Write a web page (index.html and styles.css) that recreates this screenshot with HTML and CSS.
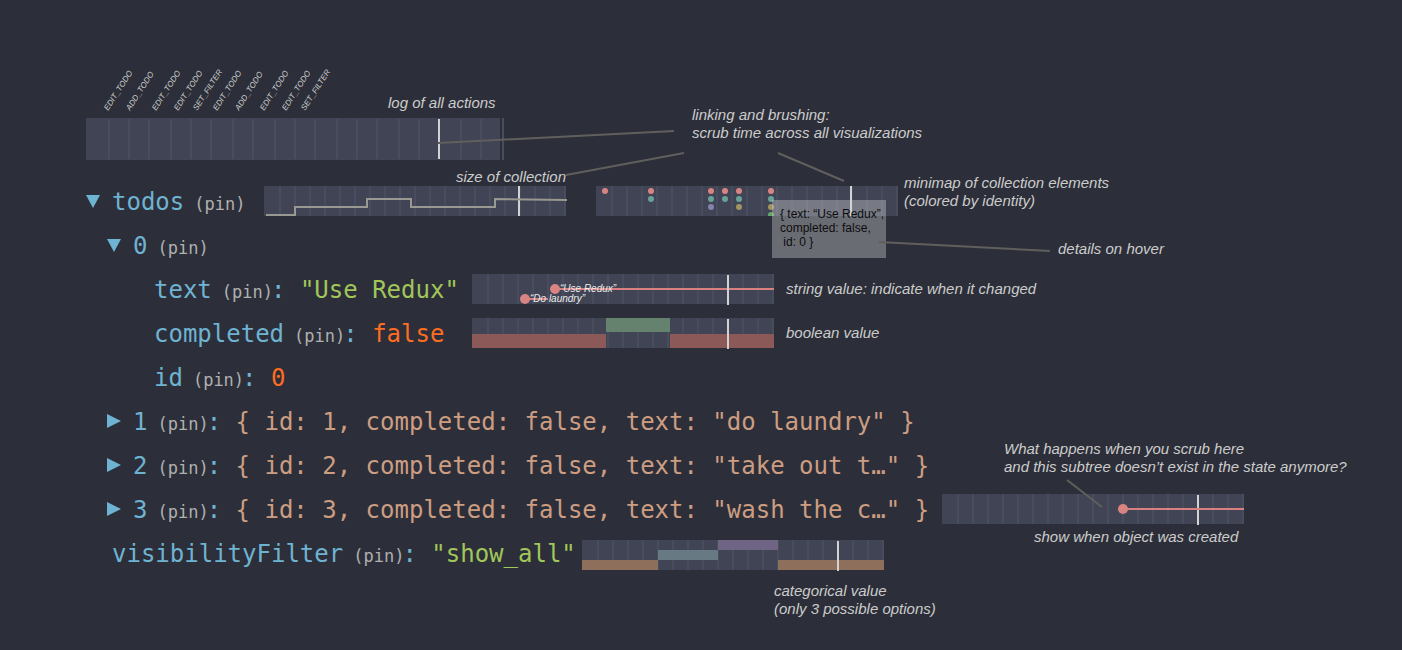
FILE: index.html
```html
<!DOCTYPE html>
<html lang="en">
<head>
<meta charset="utf-8">
<title>State inspector</title>
<link rel="stylesheet" href="styles.css">
</head>
<body>
<svg class="defs" width="0" height="0" aria-hidden="true">
  <defs>
    <pattern id="ticks" width="15" height="30" patternUnits="userSpaceOnUse">
      <rect class="track" width="15" height="30"/>
      <rect class="tick" width="2" height="30"/>
    </pattern>
    <g id="strip">
      <rect fill="url(#ticks)" width="302" height="30"/>
      <rect class="track" width="2" height="30"/>
    </g>
  </defs>
</svg>
<main class="board">
  <header class="log">
    <svg class="names" width="260" height="50" viewBox="86 64 260 50">
      <text transform="translate(108 111) rotate(-57)">EDIT_TODO</text>
      <text transform="translate(130 111) rotate(-57)">ADD_TODO</text>
      <text transform="translate(156 111) rotate(-57)">EDIT_TODO</text>
      <text transform="translate(178 111) rotate(-57)">EDIT_TODO</text>
      <text transform="translate(197 111) rotate(-57)">SET_FILTER</text>
      <text transform="translate(217 111) rotate(-57)">EDIT_TODO</text>
      <text transform="translate(239 111) rotate(-57)">ADD_TODO</text>
      <text transform="translate(264 111) rotate(-57)">EDIT_TODO</text>
      <text transform="translate(286 111) rotate(-57)">EDIT_TODO</text>
      <text transform="translate(305 111) rotate(-57)">SET_FILTER</text>
    </svg>
    <svg class="actions" width="418" height="42" viewBox="0 0 418 42">
      <rect class="track" width="414" height="42"/>
      <path class="tick" d="M22 1h2v40h-2zM42 1h2v40h-2zM62 1h2v40h-2zM84 1h2v40h-2zM104 1h2v40h-2zM124 1h2v40h-2zM146 1h2v40h-2zM166 1h2v40h-2zM188 1h2v40h-2zM208 1h2v40h-2zM228 1h2v40h-2zM250 1h2v40h-2zM270 1h2v40h-2zM290 1h2v40h-2zM312 1h2v40h-2zM332 1h2v40h-2zM374 1h2v40h-2zM394 1h2v40h-2zM416 0h2v42h-2z"/>
      <rect class="cursor" x="352" y="1" width="2" height="40"/>
    </svg>
  </header>

  <section class="tree">
    <div class="row root">
      <button class="toggle" aria-label="Collapse todos"><svg width="14" height="14"><path d="M0 1H14L7 14Z"/></svg></button>
      <div class="entry w-root"><span class="key">todos</span><button class="pin">(pin)</button></div>
      <svg class="strip" width="304" height="30">
        <use href="#strip"/>
        <rect class="cursor" x="254" width="2" height="30"/>
        <path class="size" d="M2 29H31V21H103V13H147V21H231V13L303 14"/>
      </svg>
      <svg class="strip minimap" width="302" height="30">
        <use href="#strip"/>
        <g class="c-red"><circle cx="9" cy="5" r="3"/><circle cx="55" cy="5" r="3"/><circle cx="115" cy="5" r="3"/><circle cx="129" cy="5" r="3"/><circle cx="143" cy="5" r="3"/><circle cx="175" cy="5" r="3"/></g>
        <g class="c-teal"><circle cx="55" cy="13" r="3"/><circle cx="115" cy="13" r="3"/><circle cx="129" cy="13" r="3"/><circle cx="143" cy="13" r="3"/><circle cx="175" cy="13" r="3"/></g>
        <circle class="c-purple" cx="115" cy="21" r="3"/>
        <g class="c-yellow"><circle cx="143" cy="21" r="3"/><circle cx="175" cy="21" r="3"/></g>
        <circle class="c-green" cx="175" cy="29" r="3"/>
        <rect class="cursor" x="254" width="2" height="30"/>
      </svg>
    </div>
    <div class="row item">
      <button class="toggle" aria-label="Collapse 0"><svg width="14" height="14"><path d="M0 1H14L7 14Z"/></svg></button>
      <div class="entry"><span class="key">0</span><button class="pin">(pin)</button></div>
    </div>
    <div class="row leaf">
      <div class="entry w-leaf"><span class="key">text</span><button class="pin">(pin)</button><span class="key">: </span><span class="string">"Use Redux"</span></div>
      <svg class="strip" width="302" height="32" viewBox="0 -1 302 32">
        <use href="#strip"/>
        <path class="event" d="M83 15H302M53 25H76"/>
        <g class="c-red"><circle cx="83" cy="15" r="5"/><circle cx="53" cy="25" r="5"/></g>
        <text x="88" y="18">“Use Redux”</text>
        <text x="58" y="28">“Do laundry”</text>
        <rect class="cursor" x="255" y="1" width="2" height="30"/>
      </svg>
      <span class="note">string value: indicate when it changed</span>
    </div>
    <div class="row leaf">
      <div class="entry w-leaf"><span class="key">completed</span><button class="pin">(pin)</button><span class="key">: </span><span class="literal">false</span></div>
      <svg class="strip" width="302" height="32" viewBox="0 -1 302 32">
        <use href="#strip"/>
        <path class="no" d="M0 16H134V30H0ZM198 16H302V30H198Z"/>
        <rect class="yes" x="134" width="64" height="14"/>
        <rect class="cursor" x="255" y="1" width="2" height="30"/>
      </svg>
      <span class="note">boolean value</span>
    </div>
    <div class="row leaf">
      <div class="entry"><span class="key">id</span><button class="pin">(pin)</button><span class="key">: </span><span class="literal">0</span></div>
    </div>
    <div class="row item">
      <button class="toggle" aria-label="Expand 1"><svg width="14" height="14"><path d="M0 0L14 7L0 14Z"/></svg></button>
      <div class="entry"><span class="key">1</span><button class="pin">(pin)</button><span class="key">: </span><span class="preview">{ id: 1, completed: false, text: "do laundry" }</span></div>
    </div>
    <div class="row item">
      <button class="toggle" aria-label="Expand 2"><svg width="14" height="14"><path d="M0 0L14 7L0 14Z"/></svg></button>
      <div class="entry"><span class="key">2</span><button class="pin">(pin)</button><span class="key">: </span><span class="preview">{ id: 2, completed: false, text: "take out t…" }</span></div>
    </div>
    <div class="row item">
      <button class="toggle" aria-label="Expand 3"><svg width="14" height="14"><path d="M0 0L14 7L0 14Z"/></svg></button>
      <div class="entry w-item"><span class="key">3</span><button class="pin">(pin)</button><span class="key">: </span><span class="preview">{ id: 3, completed: false, text: "wash the c…" }</span></div>
      <svg class="strip" width="302" height="32" viewBox="0 -1 302 32">
        <use href="#strip"/>
        <rect class="cursor" x="255" y="1" width="2" height="30"/>
        <path class="event" d="M181 15H302"/>
        <circle class="c-red" cx="181" cy="15" r="5"/>
      </svg>
    </div>
    <div class="row filter">
      <div class="entry w-filter"><span class="key">visibilityFilter</span><button class="pin">(pin)</button><span class="key">: </span><span class="string">"show_all"</span></div>
      <svg class="strip" width="302" height="36" viewBox="0 -5 302 36">
        <use href="#strip"/>
        <path class="cat-a" d="M0 20H76V30H0ZM196 20H302V30H196Z"/>
        <rect class="cat-b" x="76" y="10" width="60" height="10"/>
        <rect class="cat-c" x="136" width="60" height="10"/>
        <rect class="cursor" x="255" y="1" width="2" height="30"/>
      </svg>
    </div>
    <p class="note caption">categorical value<br>(only 3 possible options)</p>
  </section>

  <div class="tooltip" role="tooltip">{ text: “Use Redux”,
completed: false,
 id: 0 }</div>

  <svg class="connectors" width="1110" height="520" aria-hidden="true">
    <path d="M438 143L674 131M566 175L684 153M778 153L844 181M879 242L1050 251M1067 480L1102 507"/>
  </svg>
  <p class="note pinned n-log">log of all actions</p>
  <p class="note pinned n-link">linking and brushing:<br>scrub time across all visualizations</p>
  <p class="note pinned n-size">size of collection</p>
  <p class="note pinned n-map">minimap of collection elements<br>(colored by identity)</p>
  <p class="note pinned n-hover">details on hover</p>
  <p class="note pinned n-what">What happens when you scrub here<br>and this subtree doesn’t exist in the state anymore?</p>
  <p class="note pinned n-show">show when object was created</p>
</main>
</body>
</html>
```
FILE: styles.css
```css
body {
  margin: 0;
  background: #2c2f39;
  color: #cccccc;
  font-family: "Liberation Sans", Arial, sans-serif;
}

svg { display: block; flex: none; }
.defs { position: absolute; }

.board { position: relative; padding: 64px 0 24px; }

/* Timeline parts */
.track { fill: #404454; }
.tick { fill: #484d5e; }
.cursor { fill: #d2d2d2; }
.size { fill: none; stroke: #999891; stroke-width: 2; }
.event { stroke: #d88180; stroke-width: 2; }
.c-red { fill: #d88482; }
.c-teal { fill: #69a198; }
.c-purple { fill: #8582b0; }
.c-yellow { fill: #a19362; }
.c-green { fill: #65a56d; }
.no { fill: #8c5959; }
.yes { fill: #65826e; }
.cat-a { fill: #8d6f5b; }
.cat-b { fill: #677a84; }
.cat-c { fill: #6f6484; }
.strip text { fill: #ececec; font-size: 10px; font-style: italic; }

/* Action log */
.log {
  display: flex;
  flex-direction: column;
  gap: 4px;
  padding: 0 86px 19px;
}
.names { overflow: visible; }
.names text { fill: #d0d0d0; font-size: 8px; font-style: italic; }

/* State tree */
.row { display: flex; align-items: center; height: 44px; white-space: nowrap; }
.root { padding-left: 86px; }
.item { padding-left: 107px; }
.leaf { padding-left: 154px; }
.filter { padding-left: 112px; }

.entry {
  flex: none;
  padding-top: 2px;
  font: 24px/42px "DejaVu Sans Mono", monospace;
  white-space: pre;
}
.w-root { width: 152px; }
.w-leaf { width: 318px; }
.w-item { width: 809px; }
.w-filter { width: 470px; }

button { margin: 0; padding: 0; border: 0; background: none; cursor: pointer; }
.toggle { margin-right: 12px; fill: #6fb3d2; }
.pin { margin: 0 -2px 0 10px; color: #b0b0b0; font: 17px "DejaVu Sans Mono", monospace; }
.key { color: #6fb3d2; }
.string { color: #a1c659; }
.literal { color: #fc6d24; }
.preview { color: #cd9d82; }
.minimap { margin-left: 28px; }

/* Annotations */
.note { margin: 0; font-size: 15px; font-style: italic; line-height: 18px; white-space: nowrap; }
.strip + .note { margin-left: 12px; }
.caption { padding: 7px 0 0 774px; }
.pinned { position: absolute; }
.n-log { left: 388px; top: 94px; }
.n-link { left: 692px; top: 106px; }
.n-size { left: 456px; top: 168px; }
.n-map { left: 904px; top: 174px; }
.n-hover { left: 1058px; top: 240px; }
.n-what { left: 1004px; top: 440px; }
.n-show { left: 1034px; top: 528px; }

.connectors { position: absolute; left: 0; top: 0; pointer-events: none; }
.connectors path { fill: none; stroke: #605f5e; stroke-width: 2; }

.tooltip {
  position: absolute;
  left: 772px;
  top: 200px;
  padding: 7px 2px 9px 8px;
  background: rgba(215, 215, 215, 0.37);
  color: #0c0c0e;
  font-size: 12px;
  line-height: 14px;
  white-space: pre;
}
```
